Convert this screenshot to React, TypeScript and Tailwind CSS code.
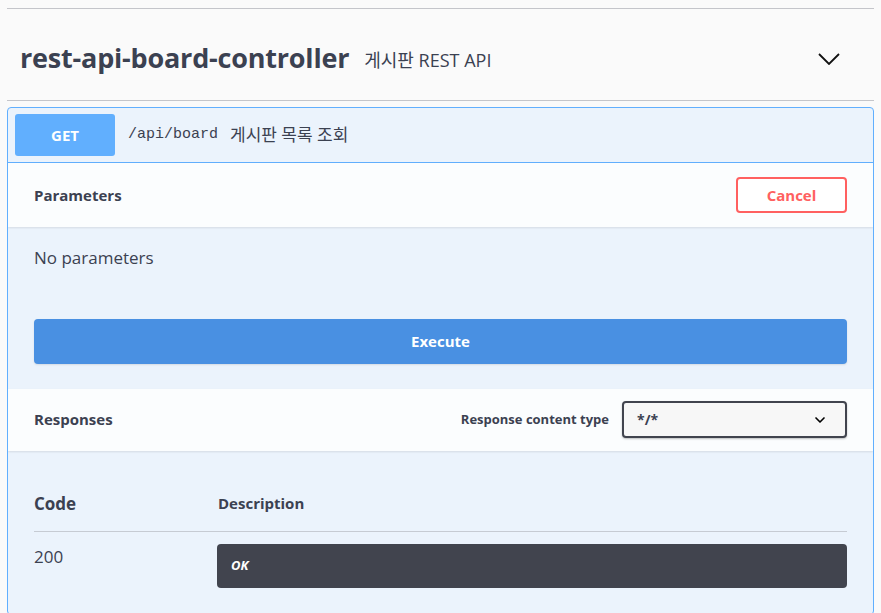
import { ChevronDown } from "lucide-react";

// Swagger 스타일 컨트롤러 섹션 (GET /api/board 펼친 상태)

const sans = { fontFamily: '"Open Sans", "Noto Sans CJK KR", sans-serif' };
const mono = { fontFamily: '"Liberation Mono", "DejaVu Sans Mono", monospace' };

export default function App() {
  return (
    <div className="min-h-[613px] bg-[#fafafa] pt-2 text-[#3b4151]" style={sans}>
      <div className="mx-[7px]">
        <div className="flex h-[93px] items-center border-y border-[#c4c5ca] pt-[8px] pl-[13px] pr-[34px]">
          <h3 className="text-[27px] font-bold tracking-[-0.2px]">rest-api-board-controller</h3>
          <span className="ml-[15px] mt-1 text-[18px]">게시판 REST API</span>
          <svg className="ml-auto" width="22" height="12" viewBox="0 0 22 12" fill="none">
            <path d="M1 1 L11 11 L21 1" stroke="#111" strokeWidth="1.8" />
          </svg>
        </div>

        <div className="mt-[6px] overflow-hidden rounded border border-[#61affe] bg-[#ebf3fc]">
          <div className="flex h-[55px] items-center border-b border-[#61affe] px-[7px]">
            <span className="flex h-[42px] w-[100px] items-center justify-center rounded-[3px] bg-[#61affe] text-[15px] font-bold text-white">
              GET
            </span>
            <span className="ml-[13px] text-[15px] font-medium" style={mono}>/api/board</span>
            <span className="ml-[12px] text-[17px]">게시판 목록 조회</span>
          </div>

          <div className="flex h-[64px] items-center justify-between bg-white/80 px-[26px] shadow-[0_1px_2px_rgba(0,0,0,0.1)]">
            <h4 className="text-[15px] font-bold">Parameters</h4>
            <button className="h-[36px] w-[111px] rounded border-2 border-[#ff6060] bg-white text-[15px] font-bold text-[#ff6060]">
              Cancel
            </button>
          </div>

          <div className="px-[26px] pt-[18px] pb-[25px]">
            <p className="text-[17px]">No parameters</p>
            <button className="mt-[48px] h-[45px] w-full rounded bg-[#4990e2] text-[15px] font-bold text-white shadow-[0_1px_2px_rgba(0,0,0,0.1)]">
              Execute
            </button>
          </div>

          <div className="flex h-[62px] items-center bg-white/80 px-[26px] shadow-[0_1px_2px_rgba(0,0,0,0.1)]">
            <h4 className="text-[15px] font-bold">Responses</h4>
            <span className="ml-auto mr-[13px] text-[13px] font-bold">Response content type</span>
            <div className="flex h-[37px] w-[225px] items-center justify-between rounded border-2 border-[#41444e] bg-[#f7f7f7] pl-[13px] pr-[17px] shadow-[0_1px_2px_rgba(0,0,0,0.25)]">
              <span className="text-[14px] font-bold">*/*</span>
              <ChevronDown className="h-4 w-4 text-black" strokeWidth={2.5} />
            </div>
          </div>

          <div className="px-[26px] pt-[40px] pb-[26px]">
            <div className="flex items-center border-b border-[#c6cbd3] pb-[15px]">
              <span className="w-[184px] text-[17px] font-bold">Code</span>
              <span className="text-[15px] font-bold">Description</span>
            </div>
            <div className="flex pt-[12px]">
              <span className="w-[183px] text-[17px]">200</span>
              <div className="flex h-[44px] flex-1 items-center rounded bg-[#41444e] px-[14px]">
                <span className="text-[13px] font-bold italic text-white">OK</span>
              </div>
            </div>
          </div>
        </div>
      </div>
    </div>
  );
}
